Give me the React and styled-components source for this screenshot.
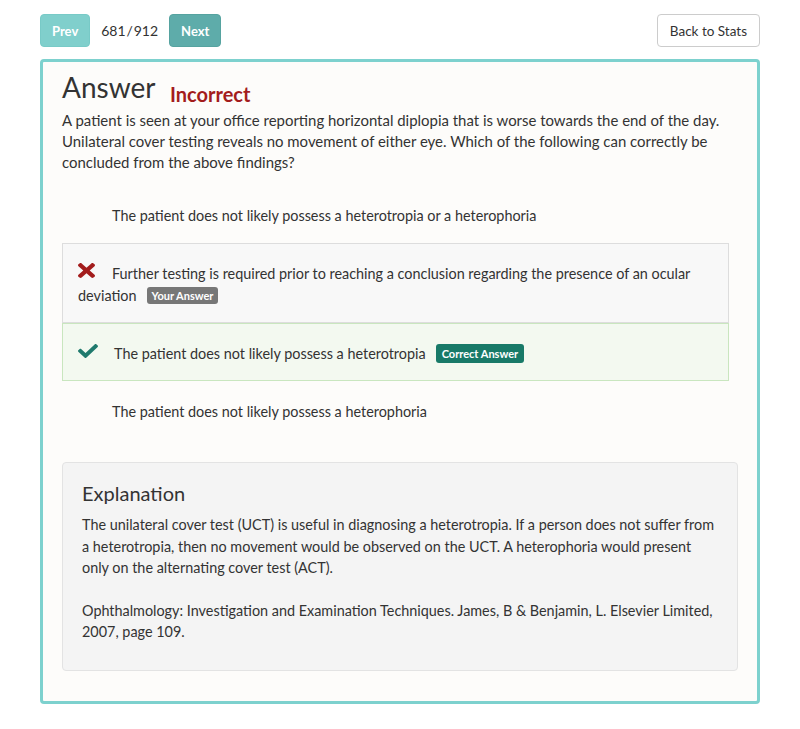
import styled, { createGlobalStyle } from 'styled-components';

const GlobalStyle = createGlobalStyle`
  body {
    margin: 0;
    background: #ffffff;
    font-family: Lato, "Open Sans", sans-serif;
    color: #333333;
  }
`;

const options = [
  { text: 'The patient does not likely possess a heterotropia or a heterophoria' },
  {
    text: 'Further testing is required prior to reaching a conclusion regarding the presence of an ocular deviation',
    status: 'wrong',
  },
  { text: 'The patient does not likely possess a heterotropia', status: 'right' },
  { text: 'The patient does not likely possess a heterophoria' },
];

function CrossIcon() {
  return (
    <svg width="17" height="15" viewBox="0 80 352 352" preserveAspectRatio="none" fill="currentColor">
      <path d="M242.72 256l100.07-100.07c12.28-12.28 12.28-32.19 0-44.48l-22.24-22.24c-12.28-12.28-32.19-12.28-44.48 0L176 189.28 75.93 89.21c-12.28-12.28-32.19-12.28-44.48 0L9.21 111.45c-12.28 12.28-12.28 32.19 0 44.48L109.28 256 9.21 356.07c-12.28 12.28-12.28 32.19 0 44.48l22.24 22.24c12.28 12.28 32.2 12.28 44.48 0L176 322.72l100.07 100.07c12.28 12.28 32.2 12.28 44.48 0l22.24-22.24c12.28-12.28 12.28-32.19 0-44.48L242.72 256z" />
    </svg>
  );
}

function CheckIcon() {
  return (
    <svg width="20" height="14" viewBox="0 66 512 380" preserveAspectRatio="none" fill="currentColor">
      <path d="M173.898 439.404l-166.4-166.4c-9.997-9.997-9.997-26.206 0-36.204l36.203-36.204c9.997-9.998 26.207-9.998 36.204 0L192 312.69 432.095 72.596c9.997-9.997 26.207-9.997 36.204 0l36.203 36.204c9.997 9.997 9.997 26.206 0 36.204l-294.4 294.401c-9.998 9.997-26.207 9.997-36.204-.001z" />
    </svg>
  );
}

export default function App() {
  return (
    <Page>
      <GlobalStyle />
      <TopBar>
        <NavGroup>
          <NavButton $light>Prev</NavButton>
          <Counter>681{'\u200A'}/{'\u200A'}912</Counter>
          <NavButton>Next</NavButton>
        </NavGroup>
        <StatsButton>Back to Stats</StatsButton>
      </TopBar>

      <Panel>
        <Heading>
          Answer <Verdict>Incorrect</Verdict>
        </Heading>
        <Question>
          A patient is seen at your office reporting horizontal diplopia that is worse towards the end of the day.
          Unilateral cover testing reveals no movement of either eye. Which of the following can correctly be
          concluded from the above findings?
        </Question>

        <OptionList>
          {options.map((o, i) => (
            <Option key={i} $status={o.status}>
              <IconSlot $status={o.status}>
                {o.status === 'wrong' && <CrossIcon />}
                {o.status === 'right' && <CheckIcon />}
              </IconSlot>
              {o.text}
              {o.status === 'wrong' && <Badge>Your Answer</Badge>}
              {o.status === 'right' && <Badge $correct>Correct Answer</Badge>}
            </Option>
          ))}
        </OptionList>

        <Well>
          <WellTitle>Explanation</WellTitle>
          <WellText>
            The unilateral cover test (UCT) is useful in diagnosing a heterotropia. If a person does not suffer from
            a heterotropia, then no movement would be observed on the UCT. A heterophoria would present only on the
            alternating cover test (ACT).
          </WellText>
          <WellText>
            Ophthalmology: Investigation and Examination Techniques. James, B &amp; Benjamin, L. Elsevier Limited,
            2007, page 109.
          </WellText>
        </Well>
      </Panel>
    </Page>
  );
}

const Page = styled.div`
  padding: 14px 40px 20px;
`;

const TopBar = styled.div`
  display: flex;
  justify-content: space-between;
  align-items: center;
  margin-bottom: 12px;
`;

const NavGroup = styled.div`
  display: flex;
  align-items: center;
  gap: 11px;
`;

const NavButton = styled.button`
  height: 33px;
  padding: 0 11px;
  border: 1px solid ${(p) => (p.$light ? '#78cac7' : '#56a3a0')};
  border-radius: 4px;
  background: ${(p) => (p.$light ? '#80cfcc' : '#5eacaa')};
  color: #ffffff;
  font-family: Lato, sans-serif;
  font-weight: bold;
  font-size: 13px;
`;

const Counter = styled.span`
  font-size: 14px;
  color: #333;
`;

const StatsButton = styled.button`
  height: 33px;
  padding: 0 12px;
  border: 1px solid #cccccc;
  border-radius: 4px;
  background: #ffffff;
  color: #333;
  font-family: Lato, sans-serif;
  font-size: 13.5px;
`;

const Panel = styled.div`
  border: 3px solid #7dd1ce;
  border-radius: 4px;
  background: #fdfcfa;
  padding: 9px 19px 30px;
`;

const Heading = styled.h2`
  margin: 0;
  font-size: 28px;
  font-weight: normal;
  line-height: 33px;
  color: #333;
`;

const Verdict = styled.span`
  display: inline-block;
  margin-left: 8px;
  font-size: 20px;
  font-weight: bold;
  color: #a31c1c;
  vertical-align: -4px;
  line-height: 20px;
`;

const Question = styled.p`
  margin: 6px 0 12px;
  font-size: 14.95px;
  line-height: 21px;
`;

const OptionList = styled.div`
  margin-right: 9px;
`;

const Option = styled.div`
  padding: 19px 15px 15px;
  font-size: 14.4px;
  line-height: 22px;
  border: 1px solid
    ${(p) => (p.$status === 'wrong' ? '#dddddd' : p.$status === 'right' ? '#c9e6bf' : 'transparent')};
  background: ${(p) => (p.$status === 'wrong' ? '#f8f8f8' : p.$status === 'right' ? '#f3f9f0' : 'transparent')};
`;

const IconSlot = styled.span`
  display: inline-block;
  width: ${(p) => (p.$status === 'right' ? '20px' : '17px')};
  height: 14px;
  margin-right: ${(p) => (p.$status === 'right' ? '16px' : '17px')};
  vertical-align: ${(p) => (p.$status === 'right' ? '1px' : '2px')};
  color: ${(p) => (p.$status === 'wrong' ? '#a31c1c' : '#1f7a6d')};
  svg {
    display: block;
  }
`;

const Badge = styled.span`
  display: inline-block;
  margin-left: 10px;
  padding: ${(p) => (p.$correct ? '4px 6px' : '3px 5px')};
  border-radius: 3px;
  background: ${(p) => (p.$correct ? '#187a68' : '#777777')};
  color: #ffffff;
  font-size: 11px;
  font-weight: bold;
  line-height: 11px;
  vertical-align: 1px;
`;

const Well = styled.div`
  margin-top: 23px;
  padding: 19px 19px 17px;
  background: #f4f4f4;
  border: 1px solid #e3e3e3;
  border-radius: 4px;
`;

const WellTitle = styled.h3`
  margin: 0 0 9px;
  font-size: 20px;
  font-weight: normal;
  line-height: 23px;
`;

const WellText = styled.p`
  margin: 0 0 21px;
  font-size: 14.4px;
  line-height: 21.5px;
  &:last-child {
    margin-bottom: 10px;
  }
`;
